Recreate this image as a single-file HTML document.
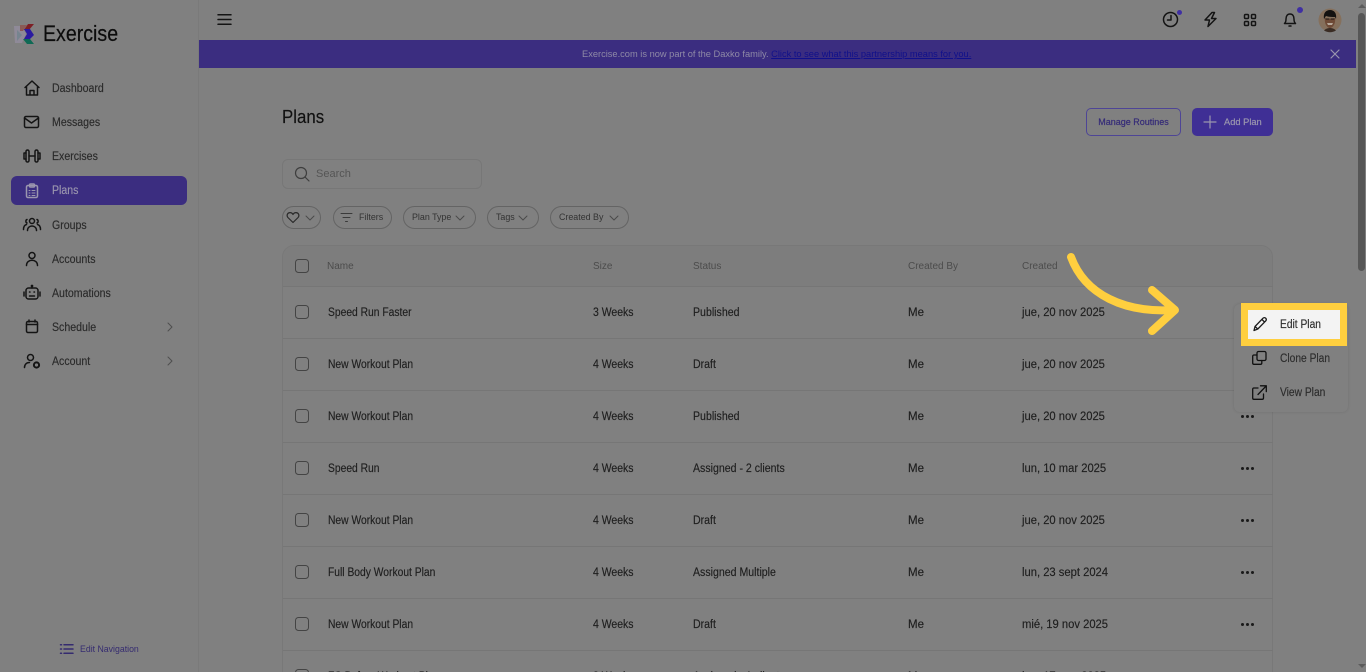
<!DOCTYPE html>
<html><head><meta charset="utf-8"><title>Plans</title>
<style>
html,body{margin:0;padding:0;width:1366px;height:672px;overflow:hidden;background:#808080;font-family:"Liberation Sans",sans-serif;color:#1c1c1c}
*{box-sizing:border-box}
#p{position:relative;width:1366px;height:672px;overflow:hidden;background:#808080}
.a{position:absolute;white-space:nowrap}
svg{position:absolute;overflow:visible;fill:none;stroke:#141414;stroke-width:1.5;stroke-linecap:round;stroke-linejoin:round}
.nav{font-size:11.5px;color:#2a2a2a;left:52px;line-height:14px;transform:scaleX(.92);transform-origin:0 50%;-webkit-text-stroke:.15px #2a2a2a}
.t{font-size:11.5px;color:#1e1e1e;line-height:14px;transform-origin:0 50%;-webkit-text-stroke:.15px #1e1e1e}
.n{left:328px;transform:scaleX(.895)}
.s{left:593px;transform:scaleX(.91)}
.u{left:693px;transform:scaleX(.92)}
.m{left:908px}
.d{left:1022px;transform:scaleX(.975)}
.th{font-size:10px;color:#4c4c4c;line-height:12px;top:261px}
.cb{position:absolute;left:295px;width:14px;height:14px;border:1.5px solid #444;border-radius:3.5px}
.ln{position:absolute;left:283px;width:990px;height:1px;background:#767676}
.chip{position:absolute;top:206px;height:23px;border:1px solid #646464;border-radius:12px;font-size:8.9px;color:#333;line-height:21px;white-space:nowrap}
.dots{position:absolute;left:1241px;width:13px;height:3px}
.dots i{position:absolute;top:0;width:3px;height:3px;border-radius:50%;background:#1a1a1a}
.dots i:nth-child(1){left:0}.dots i:nth-child(2){left:5px}.dots i:nth-child(3){left:10px}
.pm{left:1280px;font-size:11.5px;line-height:14px;color:#2c2c2c;transform:scaleX(.89);transform-origin:0 50%;-webkit-text-stroke:.15px #2c2c2c}
</style></head><body><div id="p">
<div class="a" style="left:198px;top:0;width:1px;height:672px;background:#7a7a7a"></div>

<!-- logo -->
<svg style="left:14px;top:24px;stroke:none" width="21" height="21" viewBox="0 0 21 21">
<path d="M0 2H8L12 10 8 19H1Z" fill="#8f8a98"/><path d="M3 6 8 11 3 17Z" fill="#76848f"/><path d="M6 1H13L9 7H6Z" fill="#8b5a55"/><path d="M14 0H20L15 6H10Z" fill="#7d1f25"/>
<path d="M10 5H16L20 11 16 15H10L13 10Z" fill="#2a1aa0"/><path d="M9 15H16L20 20H13Z" fill="#0f6a55"/>
</svg>
<div class="a" style="left:43px;top:20px;font-size:22px;line-height:28px;color:#0c0c0c;transform:scaleX(.89);transform-origin:0 50%;-webkit-text-stroke:.2px #0c0c0c">Exercise</div>

<!-- sidebar -->
<div class="a" style="left:11px;top:176px;width:176px;height:29px;border-radius:6px;background:#3b2d80"></div>
<div class="a nav" style="top:82px">Dashboard</div>
<div class="a nav" style="top:116px">Messages</div>
<div class="a nav" style="top:150px">Exercises</div>
<div class="a nav" style="top:184px;color:#9b96ae;-webkit-text-stroke:.15px #9b96ae">Plans</div>
<div class="a nav" style="top:219px">Groups</div>
<div class="a nav" style="top:253px">Accounts</div>
<div class="a nav" style="top:287px">Automations</div>
<div class="a nav" style="top:321px">Schedule</div>
<div class="a nav" style="top:355px">Account</div>

<svg style="left:25px;top:81px" width="14" height="14" viewBox="0 0 14 14"><path d="M0 6.500 7 0l7 6.500M1.500 5.500V14h11V5.500M5 14V9.500h4V14"/></svg>
<svg style="left:24px;top:116px" width="15" height="12" viewBox="0 0 15 12"><rect x=".5" y=".5" width="14" height="11" rx="1.500"/><path d="M.5 2 7.500 7l7-5"/></svg>
<svg style="left:23px;top:150px" width="18" height="12" viewBox="0 0 18 12"><rect x="3" y="0" width="3" height="12" rx="1.500"/><rect x="12" y="0" width="3" height="12" rx="1.500"/><path d="M6 6h6M3 3H1v6h2M15 3h2v6h-2"/></svg>
<svg style="left:26px;top:184px;stroke:#9b96ae" width="12" height="14" viewBox="0 0 12 14"><rect x=".5" y="1.500" width="11" height="12" rx="1.500"/><rect x="3.500" y="0" width="5" height="3" rx="1"/><path d="M3 6.500h1M6 6.500h3M3 9h1M6 9h3M3 11.500h1M6 11.500h3" stroke-width="1"/></svg>
<svg style="left:23px;top:218px" width="18" height="13" viewBox="0 0 18 13"><circle cx="9" cy="3" r="2.500"/><path d="M4.500 12.500c0-6 9-6 9 0M4 1.500C2.500 2 2.500 4.500 4 5M14 1.500c1.500.5 1.500 3 0 3.500M.5 11.500c0-3 1-4.500 3-5M17.500 11.500c0-3-1-4.500-3-5"/></svg>
<svg style="left:26px;top:252px" width="12" height="14" viewBox="0 0 12 14"><circle cx="6" cy="3.500" r="3"/><path d="M.5 13.500c0-7 11-7 11 0"/></svg>
<svg style="left:23px;top:285px" width="18" height="15" viewBox="0 0 18 15"><rect x="3" y="3" width="12" height="11" rx="2.500"/><path d="M9 3V1M1 7v4M17 7v4"/><circle cx="9" cy="1" r=".6"/><path d="M6.500 7h.5M11 7h.5M6.500 11h5" stroke-width="1.500"/></svg>
<svg style="left:26px;top:320px" width="12" height="13" viewBox="0 0 12 13"><rect x=".5" y="1.500" width="11" height="11" rx="1.500"/><path d="M.5 4.500h11M3 0v2M9 0v2"/></svg>
<svg style="left:24px;top:354px" width="17" height="15" viewBox="0 0 17 15"><circle cx="6.500" cy="3.500" r="3"/><path d="M.5 13.500c0-3 2-5 5-5"/><circle cx="12.500" cy="11" r="2.600" stroke-width="2"/></svg>
<svg style="left:168px;top:323px;stroke:#4e4e4e;stroke-width:1" width="4" height="8" viewBox="0 0 4 8"><path d="M0 0l4 4-4 4"/></svg>
<svg style="left:168px;top:357px;stroke:#4e4e4e;stroke-width:1" width="4" height="8" viewBox="0 0 4 8"><path d="M0 0l4 4-4 4"/></svg>

<svg style="left:60px;top:644px;stroke:#352b70;stroke-width:1.500" width="13" height="10" viewBox="0 0 13 10"><path d="M4 .8h9M4 5h9M4 9.200h9M.5 .8h1M.5 5h1M.5 9.200h1"/></svg>
<div class="a" style="left:80px;top:644px;font-size:9.500px;line-height:12px;color:#352b70;transform:scaleX(.92);transform-origin:0 50%">Edit Navigation</div>

<!-- top bar -->
<svg style="left:218px;top:14px;stroke-width:1.500" width="13" height="11" viewBox="0 0 13 11"><path d="M0 .8h13M0 5.500h13M0 10.200h13"/></svg>
<svg style="left:1163px;top:12px" width="15" height="15" viewBox="0 0 15 15"><circle cx="7.500" cy="7.500" r="7"/><path d="M8 3.500V8H4.500"/></svg>
<div class="a" style="left:1177px;top:10px;width:5px;height:5px;border-radius:50%;background:#3f2fa3"></div>
<svg style="left:1204px;top:12px" width="13" height="15" viewBox="0 0 13 15"><path d="M8 .5 1 8h4.500L4 14.500 12 6.500H7.500L10.500 .5Z"/></svg>
<svg style="left:1244px;top:14px" width="12" height="12" viewBox="0 0 12 12"><rect x=".5" y=".5" width="4" height="4" rx="1"/><rect x="7.500" y=".5" width="4" height="4" rx="1"/><rect x=".5" y="7.500" width="4" height="4" rx="1"/><rect x="7.500" y="7.500" width="4" height="4" rx="1"/></svg>
<svg style="left:1284px;top:13px" width="12" height="14" viewBox="0 0 12 14"><path d="M.5 10.500c1.200-1 1.500-2 1.500-4.500C2 3 3.500 1 6 1s4 2 4 5c0 2.500.3 3.500 1.500 4.500ZM5 13h2"/></svg>
<div class="a" style="left:1297px;top:7px;width:6px;height:6px;border-radius:50%;background:#3f2fa3"></div>
<svg style="left:1318px;top:8px;stroke:none" width="24" height="24" viewBox="0 0 24 24"><circle cx="12" cy="12" r="11.500" fill="#85705c"/><path d="M6 11C5 5 8 2 12 2s7 3 6 9l-1-2c-3 0-6 0-9-1-1 1-1 2-2 3Z" fill="#141210"/><path d="M7 10c3 1 7 1 10 0 1 5-2 10-5 10s-6-5-5-10Z" fill="#6e4a36"/><path d="M8 11h3M13 11h3" stroke="#1c1410" stroke-width="1"/><path d="M9 15h6l-1 2h-4Z" fill="#b5a89a"/><path d="M6 22.500c2-2 4-2.500 6-2.500s4 .5 6 2.500A11.500 11.500 0 0 1 6 22.500Z" fill="#3a2c24"/></svg>

<!-- banner -->
<div class="a" style="left:199px;top:40px;width:1157px;height:28px;background:#3b2d80"></div>
<div class="a" style="left:582px;top:48px;font-size:9.500px;line-height:13px;color:#8f8aa6;transform:scaleX(.977);transform-origin:0 50%">Exercise.com is now part of the Daxko family. <span style="color:#10108a;text-decoration:underline">Click to see what this partnership means for you.</span></div>
<svg style="left:1331px;top:50px;stroke:#9a96ae;stroke-width:1.200" width="8" height="8" viewBox="0 0 8 8"><path d="M0 0l8 8M8 0 0 8"/></svg>

<!-- scrollbar -->
<div class="a" style="left:1358px;top:13px;width:7px;height:258px;border-radius:4px;background:#565656"></div>
<div class="a" style="left:1357.500px;top:4px;width:0;height:0;border-left:4px solid transparent;border-right:4px solid transparent;border-bottom:4px solid #5c5c5c"></div>
<div class="a" style="left:1357.500px;top:664px;width:0;height:0;border-left:4px solid transparent;border-right:4px solid transparent;border-top:4px solid #5c5c5c"></div>

<!-- heading -->
<div class="a" style="left:282px;top:105px;font-size:18.500px;line-height:24px;color:#101010;transform:scaleX(.91);transform-origin:0 50%;-webkit-text-stroke:.15px #101010">Plans</div>
<div class="a" style="left:1086px;top:108px;width:95px;height:28px;border:1px solid #4e4596;border-radius:5px;font-size:9px;color:#352b78;line-height:27px;text-align:center;-webkit-text-stroke:.2px #352b78">Manage Routines</div>
<div class="a" style="left:1192px;top:108px;width:81px;height:28px;border-radius:5px;background:#3f2f95"></div>
<svg style="left:1204px;top:116px;stroke:#9a96ae;stroke-width:1.200" width="12" height="12" viewBox="0 0 12 12"><path d="M6 0v12M0 6h12"/></svg>
<div class="a" style="left:1224px;top:116px;font-size:9.300px;line-height:13px;color:#9a96ae;-webkit-text-stroke:.2px #9a96ae">Add Plan</div>

<!-- search -->
<div class="a" style="left:282px;top:159px;width:200px;height:30px;border:1px solid #777;border-radius:6px"></div>
<svg style="left:295px;top:167px;stroke:#3e3e3e;stroke-width:1.200" width="14" height="14" viewBox="0 0 14 14"><circle cx="6" cy="6" r="5.500"/><path d="M10 10l4 4"/></svg>
<div class="a" style="left:316px;top:168px;font-size:11px;line-height:13px;color:#555">Search</div>

<!-- chips -->
<div class="chip" style="left:282px;width:39px"></div>
<svg style="left:287px;top:212px;stroke:#2a2a2a;stroke-width:1.200" width="12" height="11" viewBox="0 0 12 11"><path d="M6 10.500.9 5.500C-.8 3.500.5.600 3 .600 4.500.6 5.500 1.500 6 2.500 6.500 1.500 7.500.6 9 .6c2.500 0 3.800 2.900 2.100 4.900Z"/></svg>
<svg style="left:306px;top:216px;stroke:#4a4a4a;stroke-width:1" width="8" height="4" viewBox="0 0 8 4"><path d="M0 0l4 4 4-4"/></svg>
<div class="chip" style="left:333px;width:59px;padding-left:25px">Filters</div>
<svg style="left:341px;top:213px;stroke:#3a3a3a;stroke-width:1" width="11" height="9" viewBox="0 0 11 9"><path d="M0 .5h11M2 4.500h7M4.500 8.500h2"/></svg>
<div class="chip" style="left:403px;width:73px;padding-left:8px">Plan Type</div>
<svg style="left:456px;top:216px;stroke:#4a4a4a;stroke-width:1" width="8" height="4" viewBox="0 0 8 4"><path d="M0 0l4 4 4-4"/></svg>
<div class="chip" style="left:487px;width:52px;padding-left:8px">Tags</div>
<svg style="left:519px;top:216px;stroke:#4a4a4a;stroke-width:1" width="8" height="4" viewBox="0 0 8 4"><path d="M0 0l4 4 4-4"/></svg>
<div class="chip" style="left:550px;width:79px;padding-left:8px">Created By</div>
<svg style="left:610px;top:216px;stroke:#4a4a4a;stroke-width:1" width="8" height="4" viewBox="0 0 8 4"><path d="M0 0l4 4 4-4"/></svg>

<!-- table -->
<div class="a" style="left:282px;top:245px;width:991px;height:440px;border:1px solid #787878;border-radius:12px"></div>
<div class="a" style="left:283px;top:246px;width:989px;height:40px;background:#7d7d7d;border-radius:11px 11px 0 0"></div>
<div class="ln" style="top:286px"></div><div class="ln" style="top:338px"></div><div class="ln" style="top:390px"></div><div class="ln" style="top:442px"></div><div class="ln" style="top:494px"></div><div class="ln" style="top:546px"></div><div class="ln" style="top:598px"></div><div class="ln" style="top:650px"></div>

<div class="cb" style="top:259px"></div>
<div class="a th" style="left:327px">Name</div><div class="a th" style="left:593px">Size</div><div class="a th" style="left:693px">Status</div><div class="a th" style="left:908px">Created By</div><div class="a th" style="left:1022px">Created</div>

<div class="cb" style="top:305px"></div><div class="a t n" style="top:306px">Speed Run Faster</div><div class="a t s" style="top:306px">3 Weeks</div><div class="a t u" style="top:306px">Published</div><div class="a t m" style="top:306px">Me</div><div class="a t d" style="top:306px">jue, 20 nov 2025</div>
<div class="cb" style="top:357px"></div><div class="a t n" style="top:358px">New Workout Plan</div><div class="a t s" style="top:358px">4 Weeks</div><div class="a t u" style="top:358px">Draft</div><div class="a t m" style="top:358px">Me</div><div class="a t d" style="top:358px">jue, 20 nov 2025</div>
<div class="cb" style="top:409px"></div><div class="a t n" style="top:410px">New Workout Plan</div><div class="a t s" style="top:410px">4 Weeks</div><div class="a t u" style="top:410px">Published</div><div class="a t m" style="top:410px">Me</div><div class="a t d" style="top:410px">jue, 20 nov 2025</div>
<div class="cb" style="top:461px"></div><div class="a t n" style="top:462px">Speed Run</div><div class="a t s" style="top:462px">4 Weeks</div><div class="a t u" style="top:462px">Assigned - 2 clients</div><div class="a t m" style="top:462px">Me</div><div class="a t d" style="top:462px">lun, 10 mar 2025</div>
<div class="cb" style="top:513px"></div><div class="a t n" style="top:514px">New Workout Plan</div><div class="a t s" style="top:514px">4 Weeks</div><div class="a t u" style="top:514px">Draft</div><div class="a t m" style="top:514px">Me</div><div class="a t d" style="top:514px">jue, 20 nov 2025</div>
<div class="cb" style="top:565px"></div><div class="a t n" style="top:566px">Full Body Workout Plan</div><div class="a t s" style="top:566px">4 Weeks</div><div class="a t u" style="top:566px">Assigned Multiple</div><div class="a t m" style="top:566px">Me</div><div class="a t d" style="top:566px">lun, 23 sept 2024</div>
<div class="cb" style="top:617px"></div><div class="a t n" style="top:618px">New Workout Plan</div><div class="a t s" style="top:618px">4 Weeks</div><div class="a t u" style="top:618px">Draft</div><div class="a t m" style="top:618px">Me</div><div class="a t d" style="top:618px">mié, 19 nov 2025</div>
<div class="cb" style="top:669px"></div><div class="a t n" style="top:670px">FC Before Workout Plan</div><div class="a t s" style="top:670px">8 Weeks</div><div class="a t u" style="top:670px">Assigned - 1 client</div><div class="a t m" style="top:670px">Me</div><div class="a t d" style="top:670px">lun, 17 mar 2025</div>

<div class="dots" style="top:415px"><i></i><i></i><i></i></div>
<div class="dots" style="top:467px"><i></i><i></i><i></i></div>
<div class="dots" style="top:519px"><i></i><i></i><i></i></div>
<div class="dots" style="top:571px"><i></i><i></i><i></i></div>
<div class="dots" style="top:623px"><i></i><i></i><i></i></div>

<!-- popup -->
<div class="a" style="left:1234px;top:304px;width:114px;height:108px;background:#808080;border-radius:6px;box-shadow:0 0 3px rgba(0,0,0,.12)"></div>
<div class="a" style="left:1241px;top:303px;width:106px;height:43px;background:#f3f3f3;border:7px solid #ffcf3f"></div>
<svg style="left:1253px;top:317px;stroke:#1c1c1c;stroke-width:1.300" width="14" height="14" viewBox="0 0 14 14"><path d="M1 13.500 2 9.500 10 1.200c.8-.8 2-.8 2.700 0s.8 1.900 0 2.700L4.800 12Zm1-4 2.800 2.500M9 2.500l2.500 2.500"/></svg>
<div class="a pm" style="top:318px">Edit Plan</div>
<svg style="left:1252px;top:351px;stroke:#101010;stroke-width:1.300" width="15" height="14" viewBox="0 0 15 14"><rect x="5" y=".5" width="9" height="9" rx="1.500"/><path d="M5 4H2C1.200 4 .7 4.500 .7 5.300V12c0 .8.500 1.300 1.300 1.300h6.500c.8 0 1.300-.5 1.300-1.300V9.500"/></svg>
<div class="a pm" style="top:352px">Clone Plan</div>
<svg style="left:1252px;top:385px;stroke:#101010;stroke-width:1.300" width="15" height="15" viewBox="0 0 15 15"><path d="M6 3H1.800C1 3 .7 3.500 .7 4.300V13c0 .8.300 1.300 1.100 1.300h8.400c.8 0 1.300-.5 1.300-1.300V9M6 9.500 14.300 .8M8.500 .8h5.800v5.800"/></svg>
<div class="a pm" style="top:386px">View Plan</div>

<!-- arrow -->
<svg style="left:0;top:0;stroke:#ffcf3f;stroke-width:8" width="1366" height="672" viewBox="0 0 1366 672"><path d="M1071 257C1085 295 1125 313 1173 310"/><path d="M1152 290 1175 310 1152 331"/></svg>
</div></body></html>
